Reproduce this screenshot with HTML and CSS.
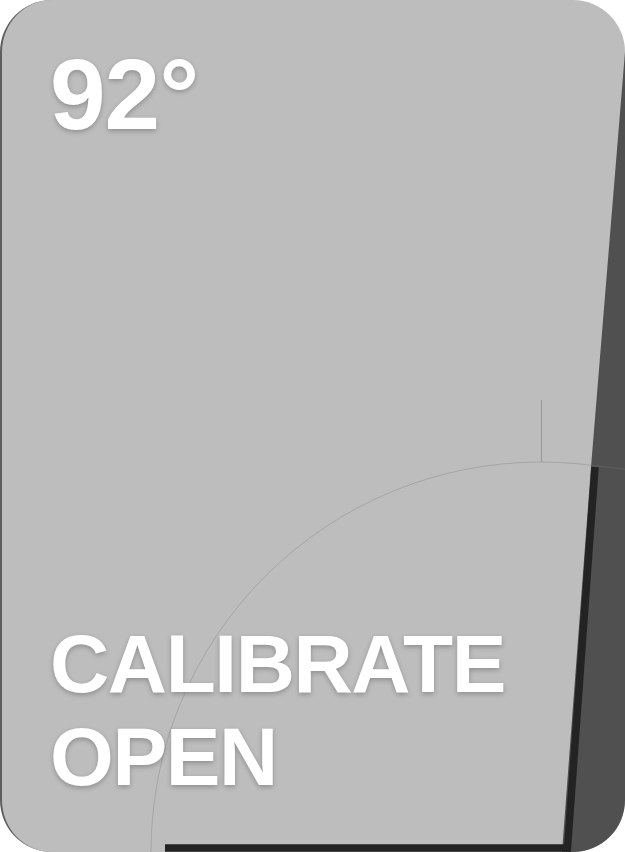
FILE: index.html
```html
<!DOCTYPE html>
<html>
<head>
<meta charset="utf-8">
<link rel="stylesheet" href="styles.css">
</head>
<body>
<div class="card">
  <svg class="art" viewBox="0 0 625 852" width="625" height="852">
    <path d="M151 852 A390 390 0 0 1 931 852" fill="none" stroke="#a6a6a6" stroke-width="1"/>
    <line x1="541.5" y1="400" x2="541.5" y2="462" stroke="#9c9c9c" stroke-width="1.2"/>
    <polygon points="625,52 591,467 562,852 625,852" fill="#505050"/>
    <path d="M592 465.6 A390 390 0 0 1 625 469.4" fill="none" stroke="#5e5e5e" stroke-width="1.2"/>
    <polyline points="165,848 567.5,848 595,467" fill="none" stroke="#232323" stroke-width="7.5" stroke-linejoin="miter"/>
  </svg>
  <div class="temp">92°</div>
  <div class="label">CALIBRATE<br>OPEN</div>
</div>
</body>
</html>
```

FILE: styles.css
```css
html, body {
  margin: 0;
  padding: 0;
  background: #ffffff;
}
.card {
  position: relative;
  box-sizing: border-box;
  width: 625px;
  height: 852px;
  border-radius: 52px;
  background: #bdbdbd;
  border-left: 2px solid #5e5e5e;
  overflow: hidden;
  display: flex;
  flex-direction: column;
  justify-content: space-between;
  padding: 44px 0 49px 48px;
  font-family: "Liberation Sans", Arial, sans-serif;
  font-weight: bold;
  color: #ffffff;
}
.art {
  position: absolute;
  left: -2px;
  top: 0;
}
.temp {
  position: relative;
  font-size: 100px;
  line-height: 1;
  letter-spacing: -1px;
  text-shadow: 0 2px 5px rgba(0, 0, 0, 0.25);
}
.label {
  position: relative;
  font-size: 82px;
  line-height: 93px;
  letter-spacing: -1.4px;
  text-shadow: 0 2px 5px rgba(0, 0, 0, 0.25);
}
```
